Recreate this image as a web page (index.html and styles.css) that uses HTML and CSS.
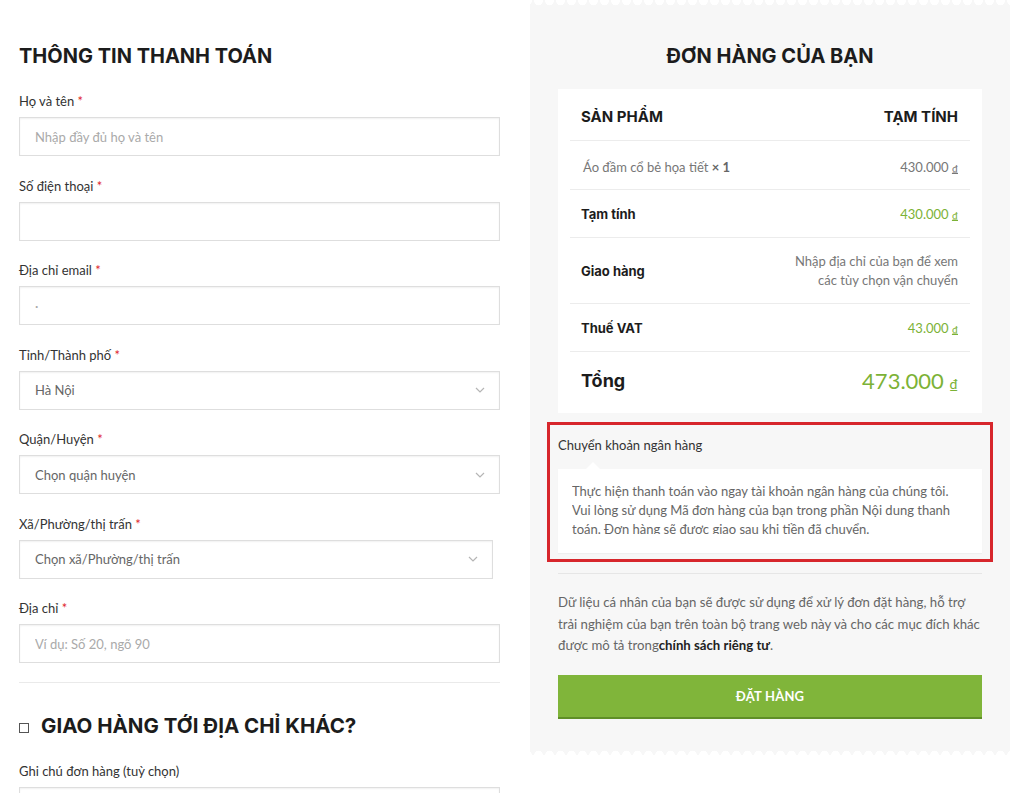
FILE: index.html
```html
<!DOCTYPE html>
<html lang="vi">
<head>
<meta charset="utf-8">
<title>Thanh toán</title>
<link rel="stylesheet" href="styles.css">
</head>
<body>
<div class="page">
  <section class="billing">
    <h2 class="title">THÔNG TIN THANH TOÁN</h2>
    <div class="fields">
      <div class="field">
        <label class="label">Họ và tên <span class="req">*</span></label>
        <input class="input" type="text" placeholder="Nhập đầy đủ họ và tên">
      </div>
      <div class="field">
        <label class="label">Số điện thoại <span class="req">*</span></label>
        <input class="input" type="text">
      </div>
      <div class="field">
        <label class="label">Địa chỉ email <span class="req">*</span></label>
        <input class="input" type="text" placeholder="·">
      </div>
      <div class="field">
        <label class="label">Tỉnh/Thành phố <span class="req">*</span></label>
        <div class="select"><span>Hà Nội</span><svg class="chev" width="10" height="6" viewBox="0 0 10 6"><path d="M1 1l4 4 4-4" fill="none" stroke="#b5b5b5" stroke-width="1.2"/></svg></div>
      </div>
      <div class="field">
        <label class="label">Quận/Huyện <span class="req">*</span></label>
        <div class="select"><span>Chọn quận huyện</span><svg class="chev" width="10" height="6" viewBox="0 0 10 6"><path d="M1 1l4 4 4-4" fill="none" stroke="#b5b5b5" stroke-width="1.2"/></svg></div>
      </div>
      <div class="field">
        <label class="label">Xã/Phường/thị trấn <span class="req">*</span></label>
        <div class="select narrow"><span>Chọn xã/Phường/thị trấn</span><svg class="chev" width="10" height="6" viewBox="0 0 10 6"><path d="M1 1l4 4 4-4" fill="none" stroke="#b5b5b5" stroke-width="1.2"/></svg></div>
      </div>
      <div class="field last">
        <label class="label">Địa chỉ <span class="req">*</span></label>
        <input class="input" type="text" placeholder="Ví dụ: Số 20, ngõ 90">
      </div>
    </div>
    <hr class="sep">
    <h3 class="ship"><span class="check"></span>GIAO HÀNG TỚI ĐỊA CHỈ KHÁC?</h3>
    <div class="field notes">
      <label class="label">Ghi chú đơn hàng (tuỳ chọn)</label>
      <div class="textarea"></div>
    </div>
  </section>

  <aside class="order">
    <h2 class="title center">ĐƠN HÀNG CỦA BẠN</h2>
    <div class="card">
      <div class="row head">
        <span>SẢN PHẨM</span><span>TẠM TÍNH</span>
      </div>
      <div class="row item">
        <span class="pname">Áo đầm cổ bẻ họa tiết <b>× 1</b></span><span class="gray">430.000 <span class="cur">₫</span></span>
      </div>
      <div class="row">
        <span class="key">Tạm tính</span><span class="green">430.000 <span class="cur">₫</span></span>
      </div>
      <div class="row">
        <span class="key">Giao hàng</span><span class="ship-note">Nhập địa chỉ của bạn để xem<br>các tùy chọn vận chuyển</span>
      </div>
      <div class="row">
        <span class="key">Thuế VAT</span><span class="green">43.000 <span class="cur">₫</span></span>
      </div>
      <div class="row total">
        <span class="key big">Tổng</span><span class="green big">473.000 <span class="cur">₫</span></span>
      </div>
    </div>

    <div class="payment">
      <div class="pay-name">Chuyển khoản ngân hàng</div>
      <div class="pay-box">
        <div class="pay-text">Thực hiện thanh toán vào ngay tài khoản ngân hàng của chúng tôi. Vui lòng sử dụng Mã đơn hàng của bạn trong phần Nội dung thanh toán. Đơn hàng sẽ được giao sau khi tiền đã chuyển.</div>
      </div>
    </div>

    <div class="privacy">
      Dữ liệu cá nhân của bạn sẽ được sử dụng để xử lý đơn đặt hàng, hỗ trợ<br>trải nghiệm của bạn trên toàn bộ trang web này và cho các mục đích khác được mô tả trong<b>chính sách riêng tư</b>.
    </div>
    <button class="btn">ĐẶT HÀNG</button>
  </aside>
</div>
</body>
</html>
```

FILE: styles.css
```css
* { box-sizing: border-box; }
html, body { margin: 0; padding: 0; background: #fff; }
body {
  font-family: Lato, "Open Sans", Arial, sans-serif;
  color: #333;
  font-size: 13px;
  overflow: hidden;
  height: 793px;
}
.page {
  display: flex;
  gap: 30px;
  padding-left: 19px;
}
.billing {
  width: 481px;
  padding-top: 44px;
}
.title {
  margin: 0;
  font-family: Inter, "Open Sans", sans-serif;
  font-weight: 700;
  font-size: 20px;
  line-height: 24px;
  color: #1c1c1c;
}
.title.center { text-align: center; }
.fields { margin-top: 23px; }
.field { margin-bottom: 19.5px; }
.field.last { margin-bottom: 0; }
.label {
  display: block;
  line-height: 20px;
  font-size: 13px;
  color: #333;
  margin-bottom: 6px;
}
.req { color: #e0262b; }
.input, .select, .textarea {
  display: block;
  width: 100%;
  height: 39px;
  border: 1px solid #dedede;
  box-shadow: inset 0 1px 2px rgba(0,0,0,0.06);
  background: #fff;
  font-family: Lato, sans-serif;
  font-size: 13px;
  padding: 0 15px;
  color: #666;
  outline: none;
}
.input::placeholder { color: #aaa; }
.select {
  display: flex;
  align-items: center;
  justify-content: space-between;
  padding: 0 14px 0 15px;
}
.select.narrow { width: 474px; }
.chev { flex: none; }
.sep {
  border: 0;
  border-top: 1px solid #eaeaea;
  margin: 19px 0 0;
  height: 0;
}
.ship {
  margin: 31px 0 0;
  display: flex;
  align-items: center;
  font-family: Inter, "Open Sans", sans-serif;
  font-weight: 700;
  font-size: 20.5px;
  line-height: 24px;
  color: #1c1c1c;
}
.check {
  width: 10px;
  height: 10px;
  border: 1px solid #555;
  margin: 3px 12px 0 0;
  flex: none;
  background: #fff;
}
.notes { margin-top: 23px; }

/* order panel */
.order {
  width: 480px;
  height: 755px;
  background: #f7f7f7;
  padding: 44px 28px 0;
  position: relative;
}
.order::before, .order::after {
  content: "";
  position: absolute;
  left: 0;
  right: 0;
  height: 10px;
  background-image: radial-gradient(circle, #fff 4px, transparent 4.6px);
  background-size: 11px 10px;
  background-repeat: repeat-x;
}
.order::before { top: 0; background-position: 3px -4px; }
.order::after { bottom: 0; background-position: 3px 5px; }
.card {
  margin-top: 21px;
  background: #fff;
  padding: 0 12px;
}
.row {
  display: flex;
  justify-content: space-between;
  align-items: center;
  padding: 14px 12px 13px 11px;
  line-height: 20px;
  border-bottom: 1px solid #ececec;
}
.row.head {
  padding-top: 18px;
  padding-bottom: 13px;
  font-family: Inter, "Open Sans", sans-serif;
  font-weight: 700;
  font-size: 15px;
  color: #1c1c1c;
}
.row.item { padding-top: 16px; padding-bottom: 12px; }
.pname { color: #777; padding-left: 2px; }
.pname b { color: #666; font-weight: 700; }
.gray { color: #777; }
.key {
  font-family: Inter, "Open Sans", sans-serif;
  font-weight: 700;
  font-size: 13px;
  color: #1c1c1c;
}
.green { color: #7cb236; }
.cur { font-size: 10px; line-height: 1; text-decoration: underline; }
.ship-note {
  text-align: right;
  color: #777;
  line-height: 19px;
}
.row.total {
  border-bottom: 0;
  padding-bottom: 17px;
  line-height: 30px;
}
.key.big { font-size: 18px; }
.green.big { font-size: 22px; }
.green.big .cur { font-size: 14px; }

.payment {
  margin: 9px -11px 0;
  border: 3px solid #d7262c;
  padding: 10px 8px 6px;
}
.pay-name {
  line-height: 20px;
  color: #333;
}
.pay-box {
  margin-top: 14px;
  background: #fff;
  padding: 13px 14px 19px;
  position: relative;
  box-shadow: 0 1px 1px rgba(0,0,0,0.03);
}
.pay-box::before {
  content: "";
  position: absolute;
  top: -7px;
  left: 28px;
  border: 7px solid transparent;
  border-top: 0;
  border-bottom-color: #fff;
}
.pay-text {
  height: 52px;
  overflow: hidden;
  line-height: 19px;
  color: #666;
}
.privacy {
  margin-top: 11px;
  border-top: 1px solid #e6e6e6;
  padding-top: 18px;
  font-size: 13.2px;
  line-height: 21.5px;
  color: #666;
}
.privacy b { color: #222; }
.btn {
  display: block;
  width: 100%;
  margin-top: 18px;
  height: 44px;
  border: 0;
  border-bottom: 2px solid #5f8f27;
  background: #80b53a;
  color: #fff;
  font-family: Lato, sans-serif;
  font-weight: 700;
  font-size: 13px;
  letter-spacing: 0.2px;
}
```
